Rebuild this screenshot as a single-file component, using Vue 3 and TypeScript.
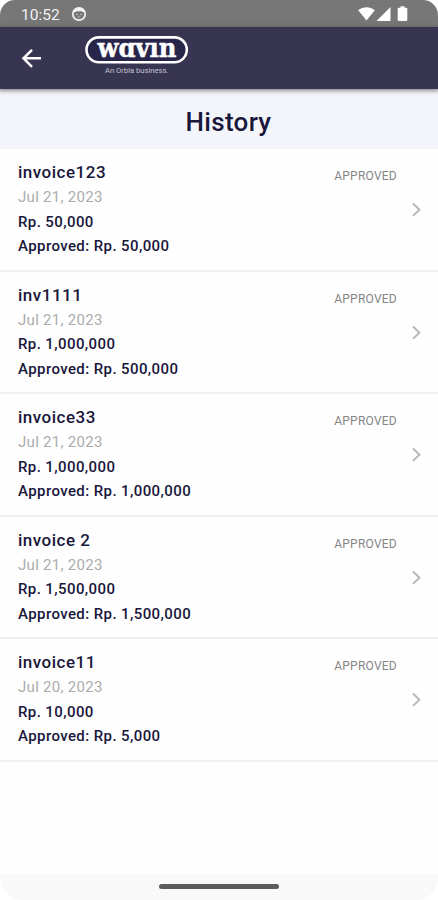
<script setup lang="ts">
interface Invoice {
  name: string
  date: string
  amount: string
  approved: string
}

const invoices: Invoice[] = [
  { name: 'invoice123', date: 'Jul 21, 2023', amount: '50,000', approved: '50,000' },
  { name: 'inv1111', date: 'Jul 21, 2023', amount: '1,000,000', approved: '500,000' },
  { name: 'invoice33', date: 'Jul 21, 2023', amount: '1,000,000', approved: '1,000,000' },
  { name: 'invoice 2', date: 'Jul 21, 2023', amount: '1,500,000', approved: '1,500,000' },
  { name: 'invoice11', date: 'Jul 20, 2023', amount: '10,000', approved: '5,000' },
]
</script>

<template>
  <div class="screen">
    <div class="status">
      <span class="clock">10:52</span>
      <svg class="face" width="16" height="16" viewBox="0 0 16 16">
        <circle cx="8" cy="8" r="6.2" fill="none" stroke="#f4f4f4" stroke-width="1.7" />
        <path d="M2.500 6.500C3 3.500 5 1.800 8 1.800s5 1.700 5.500 4.700L11.500 6 9.500 5 8 5.500 6.500 5 4.500 6z" fill="#f4f4f4" />
        <path d="M5 8.500h2M9 8.500h2M6.500 11h3" stroke="#b8b8b8" stroke-width="1" />
      </svg>
      <svg class="signals" width="52" height="18" viewBox="0 0 52 18">
        <path d="M.2 5.200C5 1.100 12 1.100 16.800 5.200L8.500 15.600z" fill="#fff" />
        <path d="M32.500 2v14H18.500z" fill="#fff" />
        <path d="M42.500 1.200h4v1.500h1.600q1.200 0 1.200 1.200v10.900q0 1.200-1.200 1.200h-7.200q-1.200 0-1.200-1.200V3.900q0-1.200 1.200-1.200h1.600z" fill="#fff" />
      </svg>
    </div>
    <header class="bar">
      <svg class="back" width="22" height="22" viewBox="0 0 22 22">
        <path d="M20 11.300H2.500M11 2.800L2.500 11.300l8.500 8.500" fill="none" stroke="#fff" stroke-width="2.500" />
      </svg>
      <svg class="logo" width="104" height="50" viewBox="0 -8 104 50">
        <rect x="1.500" y="2.400" width="100.300" height="24.800" rx="12.400" fill="#28254a" stroke="#fff" stroke-width="2.600" />
        <text x="12.500" y="21.700" class="word" textLength="79" lengthAdjust="spacingAndGlyphs">wɑvın</text>
        <text x="20" y="38.300" class="tagline" textLength="63.500" lengthAdjust="spacingAndGlyphs">An Orbia business.</text>
      </svg>
    </header>
    <h1 class="title">History</h1>
    <ul class="list">
      <li v-for="item in invoices" :key="item.name" class="item">
        <div class="details">
          <div class="name">{{ item.name }}</div>
          <div class="date">{{ item.date }}</div>
          <div class="money">Rp. {{ item.amount }}</div>
          <div class="money">Approved: Rp. {{ item.approved }}</div>
        </div>
        <span class="state">APPROVED</span>
        <svg class="chevron" width="12" height="16" viewBox="0 0 12 16">
          <path d="M2 1.500L8.400 7.700 2 13.900" fill="none" stroke="#b8b8b8" stroke-width="2" />
        </svg>
      </li>
    </ul>
    <div class="nav"><div class="handle"></div></div>
  </div>
</template>

<style>
body {
  background: #fff;
}
</style>

<style scoped>
.screen {
  display: flex;
  flex-direction: column;
  width: 438px;
  height: 900px;
  overflow: hidden;
  border-radius: 15px 15px 22px 22px;
  background: #fefefe;
  color: #19173b;
  font-family: Roboto, "Liberation Sans", sans-serif;
}
.status {
  display: flex;
  flex: none;
  align-items: center;
  height: 27px;
  padding: 0 28px 0 21px;
  background: #777;
}
.clock {
  width: 50px;
  padding-top: 2px;
  color: #f2f2f2;
  font-size: 15.5px;
  line-height: 20px;
}
.face {
  margin-top: 1px;
}
.signals {
  margin-left: auto;
}
.bar {
  position: relative;
  display: flex;
  flex: none;
  height: 62px;
  padding-left: 21px;
  background: #383552;
  box-shadow: 0 1px 4px 1px rgba(70, 70, 60, 0.6);
}
.back {
  margin-top: 20px;
}
.logo {
  margin-left: 42px;
}
.word {
  fill: #fff;
  stroke: #fff;
  stroke-width: 0.5px;
  font: bold 25.5px "DejaVu Serif", serif;
}
.tagline {
  fill: #c5c4d0;
  font: 7.5px Roboto, sans-serif;
}
.title {
  flex: none;
  height: 60px;
  margin: 0;
  padding: 3px 0 0 19px;
  box-sizing: border-box;
  background: #f4f5fa;
  font-size: 26px;
  font-weight: 500;
  letter-spacing: 0.3px;
  line-height: 60px;
  text-align: center;
}
.list {
  flex: 1;
  margin: 0;
  padding: 0;
  list-style: none;
}
.item {
  display: flex;
  box-sizing: border-box;
  height: 122.6px;
  padding: 11px 15px 0 18px;
  border-bottom: 2px solid #f0f0f0;
}
.details {
  flex: 1;
}
.name {
  font-size: 17px;
  font-weight: 500;
  letter-spacing: 0.5px;
  line-height: 25px;
}
.date {
  color: #acacac;
  font-size: 15px;
  letter-spacing: 0.3px;
  line-height: 24.5px;
}
.money {
  font-size: 15px;
  font-weight: 500;
  letter-spacing: 0.4px;
  line-height: 24.5px;
}
.state {
  margin-top: 8px;
  color: #858585;
  font-size: 12px;
  letter-spacing: 0.25px;
  line-height: 16px;
}
.chevron {
  margin: 42px 0 0 14px;
}
.nav {
  display: flex;
  flex: none;
  justify-content: center;
  height: 26px;
  background: #f9f9f9;
}
.handle {
  width: 120px;
  height: 5px;
  margin-top: 10px;
  border-radius: 3px;
  background: #5c5c5c;
}
</style>
